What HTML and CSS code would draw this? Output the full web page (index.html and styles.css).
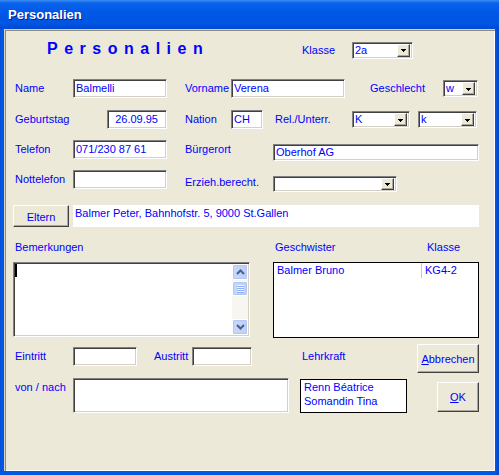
FILE: index.html
```html
<!DOCTYPE html>
<html>
<head>
<meta charset="utf-8">
<title>Personalien</title>
<link rel="stylesheet" href="styles.css">
</head>
<body>

<div class="window">
<div class="titlebar">Personalien</div>
<div class="frame">
<div class="panel">

  <div class="row row-head">
    <div class="heading">Personalien</div>
    <div class="label w50">Klasse</div>
    <div class="combo w61"><span class="combo-text">2a</span><span class="drop"><svg width="5" height="3" shape-rendering="crispEdges"><path d="M0 0h5v1H0zM1 1h3v1H1zM2 2h1v1H2z" fill="#000"/></svg></span></div>
  </div>

  <div class="row row-name">
    <div class="label w58">Name</div>
    <div class="field w94">Balmelli</div>
    <div class="label w46 gap18">Vorname</div>
    <div class="field w114">Verena</div>
    <div class="label w73 gap25">Geschlecht</div>
    <div class="combo w35"><span class="combo-text">w</span><span class="drop"><svg width="5" height="3" shape-rendering="crispEdges"><path d="M0 0h5v1H0zM1 1h3v1H1zM2 2h1v1H2z" fill="#000"/></svg></span></div>
  </div>

  <div class="row row-birth">
    <div class="label w92">Geburtstag</div>
    <div class="field w60 right">26.09.95</div>
    <div class="label w46 gap18">Nation</div>
    <div class="field w32">CH</div>
    <div class="label w77 gap12">Rel./Unterr.</div>
    <div class="combo w58"><span class="combo-text">K</span><span class="drop"><svg width="5" height="3" shape-rendering="crispEdges"><path d="M0 0h5v1H0zM1 1h3v1H1zM2 2h1v1H2z" fill="#000"/></svg></span></div>
    <div class="combo w59 gap8"><span class="combo-text">k</span><span class="drop"><svg width="5" height="3" shape-rendering="crispEdges"><path d="M0 0h5v1H0zM1 1h3v1H1zM2 2h1v1H2z" fill="#000"/></svg></span></div>
  </div>

  <div class="row row-phone">
    <div class="label w58">Telefon</div>
    <div class="field w94">071/230 87 61</div>
    <div class="label w88 gap18">Bürgerort</div>
    <div class="field w206 short push4">Oberhof AG</div>
  </div>

  <div class="row row-emergency">
    <div class="label w58">Nottelefon</div>
    <div class="field w94"></div>
    <div class="label w88 gap18 push3">Erzieh.berecht.</div>
    <div class="combo w124 push6 low"><span class="combo-text"></span><span class="drop"><svg width="5" height="3" shape-rendering="crispEdges"><path d="M0 0h5v1H0zM1 1h3v1H1zM2 2h1v1H2z" fill="#000"/></svg></span></div>
  </div>

  <div class="row row-parents">
    <div class="btn btn-parents">Eltern</div>
    <div class="flat">Balmer Peter, Bahnhofstr. 5, 9000 St.Gallen</div>
  </div>

  <div class="row row-captions">
    <div class="label w260">Bemerkungen</div>
    <div class="label w152">Geschwister</div>
    <div class="label">Klasse</div>
  </div>

  <div class="row row-lists">
    <div class="memo">
      <div class="memo-text"><span class="caret"></span></div>
      <div class="vscroll">
        <div class="sbtn"><svg width="9" height="6"><path d="M1 5L4.5 1.5L8 5" fill="none" stroke="#4d6185" stroke-width="2"/></svg></div>
        <div class="thumb"><svg width="7" height="8" shape-rendering="crispEdges"><path d="M0 0h7M0 2h7M0 4h7M0 6h7" stroke="#eef4fe" transform="translate(0 0.5)"/><path d="M0 1h7M0 3h7M0 5h7M0 7h7" stroke="#8cb0f8" transform="translate(0 0.5)"/></svg></div>
        <div class="track"></div>
        <div class="sbtn"><svg width="9" height="6"><path d="M1 1L4.5 4.5L8 1" fill="none" stroke="#4d6185" stroke-width="2"/></svg></div>
      </div>
    </div>
    <div class="list siblings">
      <div class="list-row">
        <div class="cell cell-name">Balmer Bruno</div>
        <div class="cell cell-class">KG4-2</div>
      </div>
    </div>
  </div>

  <div class="row row-entry">
    <div class="label w58 push3">Eintritt</div>
    <div class="field w64 push3"></div>
    <div class="label w38 gap17 push3">Austritt</div>
    <div class="field w60 push3"></div>
    <div class="label w115 gap50 push3">Lehrkraft</div>
    <div class="btn btn-cancel"><span><u>A</u>bbrechen</span></div>
  </div>

  <div class="row row-move">
    <div class="label w58 top">von / nach</div>
    <div class="field memo-small"></div>
    <div class="list teachers">
      <div>Renn Béatrice</div>
      <div>Somandin Tina</div>
    </div>
    <div class="btn btn-ok"><span><u>O</u>K</span></div>
  </div>

</div>
</div>
</div>

</body>
</html>
```

FILE: styles.css
```css
body {
    margin: 0;
    background: #fff;
}

.window {
    width: 499px;
    height: 475px;
    overflow: hidden;
    font-family: "Liberation Sans", Arial, sans-serif;
    font-size: 11px;
    color: #0000ff;
}

.titlebar {
    height: 29px;
    box-sizing: border-box;
    padding: 7px 0 0 8px;
    line-height: 16px;
    font-size: 13px;
    font-weight: bold;
    color: #fff;
    text-shadow: 1px 1px 0 #0a1f8f;
    background: linear-gradient(to bottom, #3d8df5 0, #0a63ec 3px, #0058e6 12px, #0055e2 24px, #0048cf 29px);
}

.frame {
    height: 446px;
    box-sizing: border-box;
    padding: 0 4px 4px 4px;
    background: linear-gradient(to right, #0a4fd8, #0058e6 2px, #0058e6 495px, #0047c9);
}

.panel {
    height: 442px;
    overflow: hidden;
    background: #ece9d8;
    box-shadow: inset 1px 1px 0 #d8d4c4, inset 2px 2px 0 #8e8c80, inset -1px -1px 0 #fff;
}

.row {
    display: flex;
    align-items: center;
    padding-left: 11px;
}

.row-head      { margin-top: 11px; height: 20px; }
.row-name      { margin-top: 19px; height: 19px; }
.row-birth     { margin-top: 12px; height: 19px; }
.row-phone     { margin-top: 11px; height: 21px; align-items: flex-start; }
.row-emergency { margin-top: 9px;  height: 22px; align-items: flex-start; }
.row-parents   { margin-top: 13px; height: 22px; }
.row-captions  { margin-top: 13px; height: 15px; line-height: 15px; }
.row-lists     { margin-top: 7px;  height: 76px; align-items: flex-start; }
.row-entry     { margin-top: 6px;  height: 29px; align-items: flex-start; }
.row-move      { margin-top: 5px;  height: 35px; align-items: flex-start; }

.heading {
    flex: none;
    width: 255px;
    margin-left: 32px;
    font-size: 16px;
    font-weight: bold;
    letter-spacing: 6.5px;
    line-height: 18px;
    margin-top: -3px;
    white-space: nowrap;
}

.label {
    flex: none;
    line-height: 19px;
    white-space: nowrap;
}

.label.top {
    line-height: 15px;
    margin-top: 2px;
}

.w32 { width: 32px; }
.w35 { width: 35px; }
.w38 { width: 38px; }
.w46 { width: 46px; }
.w50 { width: 50px; }
.w58 { width: 58px; }
.w59 { width: 59px; }
.w60 { width: 60px; }
.w61 { width: 61px; }
.w64 { width: 64px; }
.w73 { width: 73px; }
.w77 { width: 77px; }
.w88 { width: 88px; }
.w92 { width: 92px; }
.w94 { width: 94px; }
.w114 { width: 114px; }
.w115 { width: 115px; }
.w124 { width: 124px; }
.w152 { width: 152px; }
.w206 { width: 206px; }
.w260 { width: 260px; }

.gap8  { margin-left: 8px; }
.gap12 { margin-left: 12px; }
.gap17 { margin-left: 17px; }
.gap18 { margin-left: 18px; }
.gap25 { margin-left: 25px; }
.gap50 { margin-left: 50px; }

.push3 { margin-top: 3px; }
.push4 { margin-top: 4px; }
.push6 { margin-top: 6px; }

.field,
.combo {
    flex: none;
    box-sizing: border-box;
    height: 19px;
    background: #fff;
    border: 1px solid;
    border-color: #808080 #fff #fff #808080;
    box-shadow: inset 1px 1px 0 #404040, inset -1px -1px 0 #d4d0c8;
    padding: 0 2px;
    line-height: 17px;
    white-space: nowrap;
    overflow: hidden;
}

.field.right {
    text-align: right;
    padding-right: 8px;
}

.field.short {
    height: 17px;
    line-height: 15px;
}

.combo {
    display: flex;
    height: 17px;
    line-height: 15px;
    padding: 1px 2px 1px 2px;
}

.combo.low {
    height: 16px;
    line-height: 14px;
}

.combo-text {
    flex: 1;
    margin-top: -1px;
}

.drop {
    flex: none;
    width: 13px;
    box-sizing: border-box;
    background: #ece9d8;
    border: 1px solid;
    border-color: #fff #404040 #404040 #fff;
    box-shadow: inset -1px -1px 0 #aca899;
    display: flex;
    align-items: center;
    justify-content: center;
}

.drop svg {
    display: block;
    margin-top: 1px;
}

.btn {
    flex: none;
    box-sizing: border-box;
    background: #ece9d8;
    border: 1px solid;
    border-color: #fff #404040 #404040 #fff;
    box-shadow: inset -1px -1px 0 #aca899;
    display: flex;
    align-items: center;
    justify-content: center;
}

.btn-parents {
    width: 56px;
    height: 22px;
    margin-left: -2px;
    padding-top: 1px;
}

.btn-cancel {
    width: 62px;
    height: 29px;
}

.btn-ok {
    width: 42px;
    height: 30px;
    margin-left: 30px;
    margin-top: 4px;
}

.flat {
    width: 406px;
    height: 22px;
    margin-left: 4px;
    background: #fff;
    box-sizing: border-box;
    padding: 1px 2px 0 2px;
    line-height: 14px;
    white-space: nowrap;
}

.memo {
    display: flex;
    width: 237px;
    height: 75px;
    margin-left: -2px;
    box-sizing: border-box;
    background: #fff;
    border: 1px solid;
    border-color: #808080 #fff #fff #808080;
    box-shadow: inset 1px 1px 0 #404040, inset -1px -1px 0 #d4d0c8;
    padding: 1px;
}

.memo-text {
    flex: 1;
}

.caret {
    display: block;
    width: 2px;
    height: 13px;
    background: #000;
}

.vscroll {
    width: 16px;
    display: flex;
    flex-direction: column;
    background: #f7f6f1;
}

.sbtn,
.thumb {
    flex: none;
    height: 16px;
    box-sizing: border-box;
    border: 1px solid #fff;
    border-radius: 2px;
    background: linear-gradient(to right, #c8d8fb, #bccffa);
    box-shadow: inset 0 0 0 1px #b3c7f5;
    display: flex;
    align-items: center;
    justify-content: center;
}

.thumb {
    height: 15px;
    margin-top: 1px;
}

.track {
    flex: 1;
}

.list {
    box-sizing: border-box;
    background: #fff;
    border: 1px solid #000;
}

.siblings {
    width: 206px;
    height: 76px;
    margin-left: 23px;
}

.list-row {
    display: flex;
    height: 15px;
    line-height: 14px;
}

.cell-name {
    width: 144px;
    padding-left: 3px;
}

.cell-class {
    border-left: 1px solid #c8c8c8;
    padding-left: 3px;
}

.memo-small {
    width: 216px;
    height: 35px;
}

.teachers {
    width: 107px;
    height: 34px;
    margin-left: 11px;
    margin-top: 1px;
    padding: 0 3px;
    line-height: 14px;
}
```
